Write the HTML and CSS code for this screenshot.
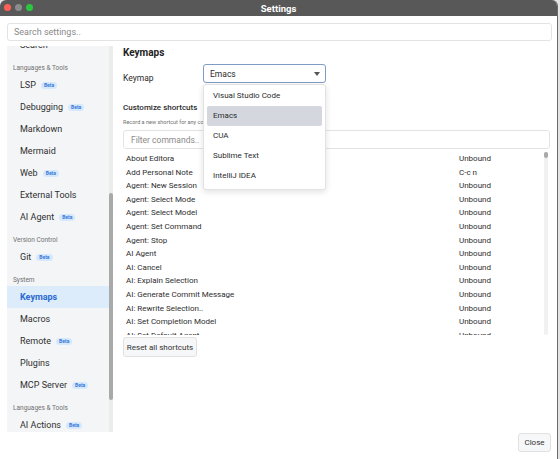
FILE: index.html
```html
<!DOCTYPE html>
<html lang="en">
<head>
    <meta charset="UTF-8">
    <meta name="viewport" content="width=device-width, initial-scale=1.0">
    <title>Settings</title>
    <link rel="stylesheet" href="styles.css">
</head>
<body>
    <div class="window">
        <div class="titlebar">
            <div class="lights">
                <span class="light red"></span>
                <span class="light gray"></span>
                <span class="light green"></span>
            </div>
            <div class="title">Settings</div>
        </div>

        <div class="search-bar">
            <input type="text" placeholder="Search settings..">
        </div>

        <div class="content">
            <!-- Sidebar -->
            <div class="sidebar">
                <div class="nav">
                    <div class="nav-item">Search</div>
                    <div class="nav-group">Languages &amp; Tools</div>
                    <div class="nav-item">LSP <span class="beta">Beta</span></div>
                    <div class="nav-item">Debugging <span class="beta">Beta</span></div>
                    <div class="nav-item">Markdown</div>
                    <div class="nav-item">Mermaid</div>
                    <div class="nav-item">Web <span class="beta">Beta</span></div>
                    <div class="nav-item">External Tools</div>
                    <div class="nav-item">AI Agent <span class="beta">Beta</span></div>
                    <div class="nav-group">Version Control</div>
                    <div class="nav-item">Git <span class="beta">Beta</span></div>
                    <div class="nav-group">System</div>
                    <div class="nav-item active">Keymaps</div>
                    <div class="nav-item">Macros</div>
                    <div class="nav-item">Remote <span class="beta">Beta</span></div>
                    <div class="nav-item">Plugins</div>
                    <div class="nav-item">MCP Server <span class="beta">Beta</span></div>
                    <div class="nav-group">Languages &amp; Tools</div>
                    <div class="nav-item">AI Actions <span class="beta">Beta</span></div>
                </div>
                <div class="side-scroll"><div class="side-thumb"></div></div>
            </div>

            <!-- Main panel -->
            <div class="main">
                <h2>Keymaps</h2>
                <div class="keymap-row">
                    <label>Keymap</label>
                    <div class="select-wrap">
                        <div class="select">
                            <span>Emacs</span>
                            <span class="arrow"></span>
                        </div>
                        <div class="dropdown">
                            <div class="option">Visual Studio Code</div>
                            <div class="option selected">Emacs</div>
                            <div class="option">CUA</div>
                            <div class="option">Sublime Text</div>
                            <div class="option">IntelliJ IDEA</div>
                        </div>
                    </div>
                </div>

                <h3>Customize shortcuts</h3>
                <p class="hint">Record a new shortcut for any command by clicking on its binding.</p>
                <input type="text" class="filter" placeholder="Filter commands..">

                <div class="shortcut-list">
                    <div class="rows">
                        <div class="row"><span>About Editora</span><span>Unbound</span></div>
                        <div class="row"><span>Add Personal Note</span><span>C-c n</span></div>
                        <div class="row"><span>Agent: New Session</span><span>Unbound</span></div>
                        <div class="row"><span>Agent: Select Mode</span><span>Unbound</span></div>
                        <div class="row"><span>Agent: Select Model</span><span>Unbound</span></div>
                        <div class="row"><span>Agent: Set Command</span><span>Unbound</span></div>
                        <div class="row"><span>Agent: Stop</span><span>Unbound</span></div>
                        <div class="row"><span>AI Agent</span><span>Unbound</span></div>
                        <div class="row"><span>AI: Cancel</span><span>Unbound</span></div>
                        <div class="row"><span>AI: Explain Selection</span><span>Unbound</span></div>
                        <div class="row"><span>AI: Generate Commit Message</span><span>Unbound</span></div>
                        <div class="row"><span>AI: Rewrite Selection..</span><span>Unbound</span></div>
                        <div class="row"><span>AI: Set Completion Model</span><span>Unbound</span></div>
                        <div class="row"><span>AI: Set Default Agent</span><span>Unbound</span></div>
                    </div>
                    <div class="list-scroll"><div class="list-thumb"></div></div>
                </div>

                <div><button class="btn">Reset all shortcuts</button></div>
            </div>
        </div>

        <div class="footer">
            <button class="btn">Close</button>
        </div>
    </div>
</body>
</html>
```

FILE: styles.css
```css
* { box-sizing: border-box; }
body { margin: 0; font-family: Roboto, "Liberation Sans", sans-serif; background: #e4e4e4; color: #2b2b2b; }
.window { width: 558px; height: 459px; background: white; border-radius: 6px 6px 0 0; overflow: hidden; display: flex; flex-direction: column; border-right: 1px solid #6a6a6a; }

/* Title bar */
.titlebar { height: 16px; flex-shrink: 0; background: #585858; position: relative; display: flex; align-items: center; justify-content: center; }
.lights { position: absolute; left: 4px; top: 4px; display: flex; gap: 4px; }
.light { width: 7px; height: 7px; border-radius: 50%; display: block; }
.light.red { background: #fe5f57; }
.light.gray { background: #8c8c8c; }
.light.green { background: #29c840; }
.title { color: white; font-size: 9.5px; font-weight: 700; }

/* Search */
.search-bar { padding: 7px 5px 0 7px; }
.search-bar input { display: block; width: 100%; height: 18px; border: 1px solid #e3e3e3; border-radius: 3px; padding: 0 6px; font: 9px Roboto, sans-serif; outline: none; }
.search-bar input::placeholder { color: #8a8a8a; }

.content { display: flex; margin-top: 5px; height: 386px; flex-shrink: 0; }

/* Sidebar */
.sidebar { width: 106px; margin-left: 7px; background: #f4f5f7; display: flex; overflow: hidden; }
.nav { flex: 1; margin-top: -12px; }
.nav-item { height: 22px; line-height: 22px; padding-left: 13px; font-size: 9px; color: #2f2f2f; white-space: nowrap; display: flex; align-items: center; }
.nav-item.active { background: #dcecfb; color: #2a6ad0; font-weight: 700; }
.nav-group { height: 18px; padding: 6px 0 0 6px; line-height: 12px; font-size: 6.5px; color: #6f6f6f; }
.beta { display: inline-block; margin-left: 5px; padding: 0 3px; height: 7px; line-height: 7px; font-size: 5px; font-weight: 700; background: #d5e8fc; color: #3a7ad8; border-radius: 4px; }
.side-scroll { width: 4px; background: #ececec; }
.side-thumb { margin-top: 147px; height: 207px; background: #a9a9a9; border-radius: 2px; }

/* Main */
.main { flex: 1; padding: 0 3px 0 10px; display: flex; flex-direction: column; }
h2 { margin: 1px 0 0; font-size: 10px; line-height: 12px; font-weight: 700; color: #222; }
.keymap-row { display: flex; align-items: flex-end; margin-top: 5px; }
.keymap-row label { width: 80px; font-size: 8.5px; }
.select-wrap { position: relative; }
.select { width: 123px; height: 19px; border: 1px solid #7e9cc4; border-radius: 3px; display: flex; align-items: center; justify-content: space-between; padding: 0 5px 0 6px; font-size: 8.5px; }
.arrow { width: 0; height: 0; border-left: 3px solid transparent; border-right: 3px solid transparent; border-top: 4px solid #555; }
.dropdown { position: absolute; top: 20px; left: 0; width: 123px; background: white; border: 1px solid #e2e2e2; border-radius: 3px; box-shadow: 0 2px 6px rgba(0, 0, 0, 0.12); padding: 1px 3px 3px; z-index: 2; }
.option { height: 20px; line-height: 20px; padding-left: 6px; font-size: 8px; border-radius: 2px; }
.option.selected { background: #d4d8de; }

h3 { margin: 19px 0 0; font-size: 8px; line-height: 12px; font-weight: 500; }
.hint { margin: 4px 0 0; font-size: 5.5px; line-height: 9px; color: #707070; white-space: nowrap; }
.filter { display: block; margin-top: 3px; width: 427px; height: 19px; border: 1px solid #e3e3e3; border-radius: 3px; padding: 0 7px; font: 8.5px Roboto, sans-serif; outline: none; }
.filter::placeholder { color: #8a8a8a; }

.shortcut-list { margin-top: 3px; height: 183px; width: 427px; display: flex; overflow: hidden; }
.rows { flex: 1; }
.row { display: grid; grid-template-columns: 333px 1fr; padding-left: 3px; height: 13.6px; line-height: 13.6px; font-size: 8px; color: #2e2e2e; }
.list-scroll { width: 4px; margin-right: 2px; background: #f1f1f1; border-radius: 2px; }
.list-thumb { height: 6px; background: #a9a9a9; border-radius: 2px; }

.btn { font: 8px Roboto, sans-serif; color: #333; background: #f6f7f8; border: 1px solid #e1e1e1; border-radius: 3px; height: 20px; padding: 0; white-space: nowrap; }
.main .btn { display: block; margin-top: 2px; width: 74px; }

.footer { flex: 1; display: flex; justify-content: flex-end; align-items: flex-start; padding: 1px 6px 0 0; }
.footer .btn { width: 33px; height: 19px; }
```
